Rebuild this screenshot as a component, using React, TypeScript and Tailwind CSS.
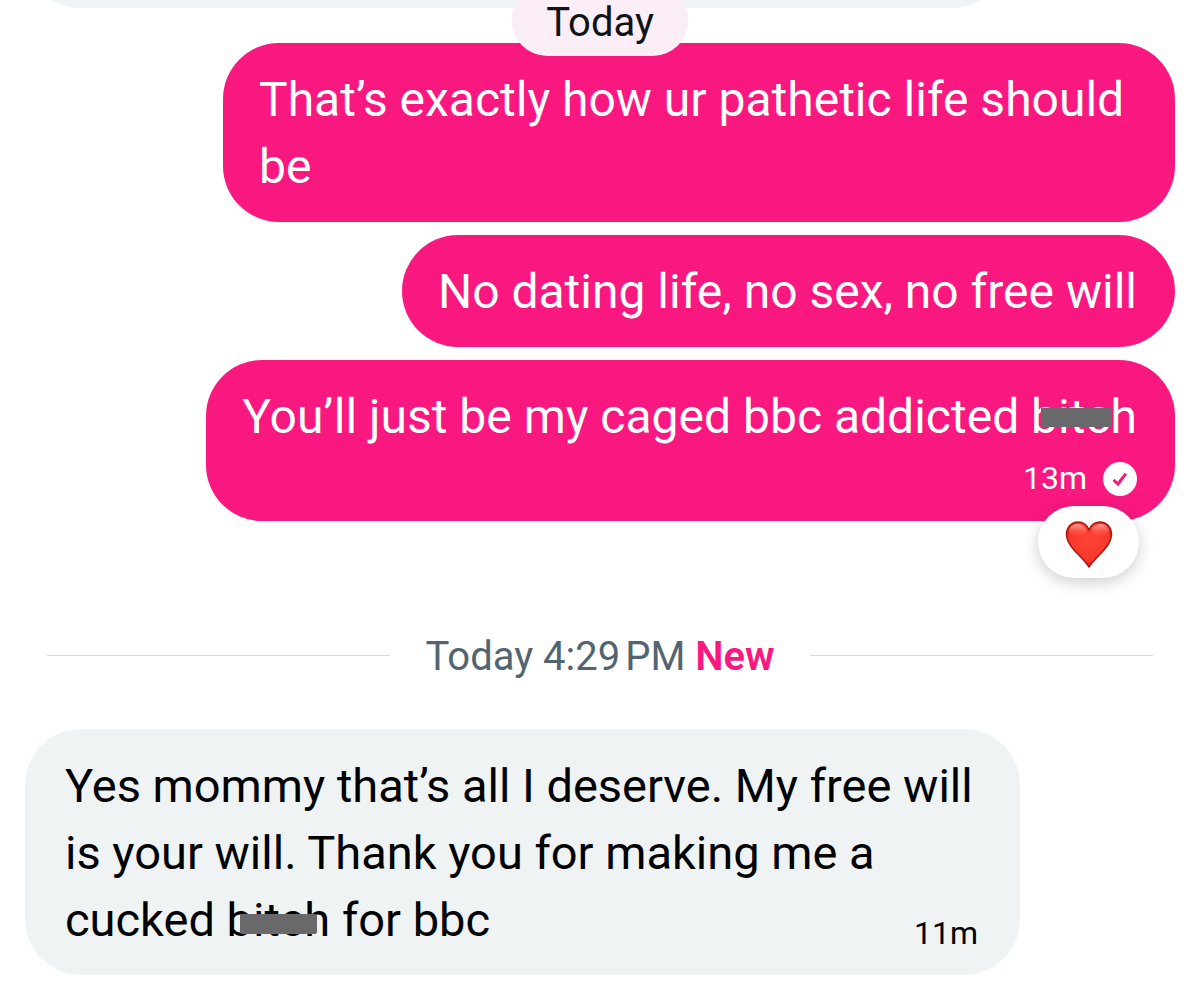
import type { ReactNode } from 'react';
import clsx from 'clsx';

type BubbleProps = {
  side: 'sent' | 'received';
  className?: string;
  children: ReactNode;
};

function Bubble({ side, className, children }: BubbleProps) {
  return (
    <div
      className={clsx(
        'relative max-w-full rounded-[56px] pt-[23px] pb-[22px] leading-[67px]',
        side === 'sent'
          ? 'self-end bg-[#f91880] pr-[38px] pl-9 text-[48px] text-white'
          : 'self-start bg-[#eff3f4] pr-[42px] pl-10 text-[47px] text-black',
        className,
      )}
    >
      {children}
    </div>
  );
}

/* Word with a grey bar painted over its middle letters */
function Censored({ word, tall }: { word: string; tall?: boolean }) {
  return (
    <span className="relative">
      {word}
      <span
        aria-hidden="true"
        className={clsx(
          'absolute bg-[#69696b]',
          tall
            ? 'top-[22px] right-[13px] left-[13px] h-[20px] rounded-xs'
            : 'top-[20px] right-[25px] left-[10px] h-[19px]',
        )}
      />
    </span>
  );
}

function ReadIcon() {
  return (
    <svg viewBox="0 0 34 34" className="size-[34px]" role="img" aria-label="Read">
      <circle cx="17" cy="17" r="17" fill="#fff" />
      <path d="M10.500 17.800L15 22L22.800 11.700" fill="none" stroke="#f91880" strokeWidth="3" />
    </svg>
  );
}

function HeartIcon() {
  return (
    <svg viewBox="0 0 48 48" className="size-12" aria-hidden="true">
      <defs>
        <radialGradient id="heart-fill" cx="0.5" cy="0.42" r="0.62">
          <stop offset="0" stopColor="#ff4436" />
          <stop offset="0.7" stopColor="#f5382c" />
          <stop offset="1" stopColor="#c9160f" />
        </radialGradient>
        <linearGradient id="heart-shine" x1="0" y1="0" x2="0" y2="1">
          <stop offset="0" stopColor="#ffb4a6" stopOpacity="0.85" />
          <stop offset="1" stopColor="#ff5a4a" stopOpacity="0" />
        </linearGradient>
      </defs>
      <path
        d="M24 47C20.500 41.500 15 36.500 9.500 30.500C4.500 25 1.500 20.500 1.500 14.500C1.500 7.500 6.500 2 13 2C18 2 22.500 5 24 10C25.500 5 30 2 35 2C41.500 2 46.500 7.500 46.500 14.500C46.500 20.500 43.500 25 38.500 30.500C33 36.500 27.500 41.500 24 47Z"
        fill="url(#heart-fill)"
        stroke="#b0140e"
        strokeWidth="1.500"
        strokeLinejoin="round"
      />
      <ellipse cx="12.500" cy="10.500" rx="8.500" ry="6.500" fill="url(#heart-shine)" />
      <ellipse cx="35.500" cy="10.500" rx="8.500" ry="6.500" fill="url(#heart-shine)" />
    </svg>
  );
}

export default function App() {
  return (
    <main className="relative flex min-h-screen flex-col overflow-hidden bg-white px-[25px] font-[Roboto,'Liberation_Sans',sans-serif]">
      {/* Tail end of the previous message */}
      <div className="flex h-2 items-end overflow-hidden">
        <div className="h-[112px] w-[983px] shrink-0 rounded-[56px] bg-[#eff3f4]" />
      </div>

      <div className="absolute -top-4 left-1/2 z-10 h-[72px] w-[177px] -translate-x-1/2 rounded-[36px] bg-[#fceef6] pt-4 text-center text-[40px] leading-[46px] text-[#0f1419]">
        Today
      </div>

      <div className="mt-[35px] flex flex-col gap-[13px]">
        <Bubble side="sent" className="w-[952px]">
          <p>That’s exactly how ur pathetic life should be</p>
        </Bubble>
        <Bubble side="sent">
          <p>No dating life, no sex, no free will</p>
        </Bubble>
        <Bubble side="sent">
          <p>
            You’ll just be my caged bbc addicted <Censored word="bitch" />
          </p>
          <div className="flex items-center justify-end gap-4 pt-2 text-[32px] leading-[41px]">
            <time>13m</time>
            <ReadIcon />
          </div>
          <button
            type="button"
            aria-label="Heart reaction"
            className="absolute right-9 -bottom-[57px] flex h-[72px] w-[101px] items-center justify-center rounded-full bg-white pt-1 shadow-[0_4px_16px_rgba(0,0,0,0.2)]"
          >
            <HeartIcon />
          </button>
        </Bubble>
      </div>

      <div className="mt-[104px] flex items-center gap-[35px] px-[22px] text-[40px] leading-[56px] text-[#536471]">
        <span className="h-px flex-1 bg-[#d5dade]" />
        <p className="pt-1">
          Today 4:29{'\u202f'}PM <span className="font-semibold text-[#f91880]">New</span>
        </p>
        <span className="h-px flex-1 bg-[#d5dade]" />
      </div>

      <div className="mt-11 flex flex-col">
        <Bubble side="received" className="w-[995px]">
          <p>
            Yes mommy that’s all I deserve. My free will is your will. Thank you for making me a
            cucked <Censored word="bitch" tall /> for bbc
            <time className="float-right mt-[27px] text-[32px] leading-[40px]">11m</time>
          </p>
        </Bubble>
      </div>
    </main>
  );
}
